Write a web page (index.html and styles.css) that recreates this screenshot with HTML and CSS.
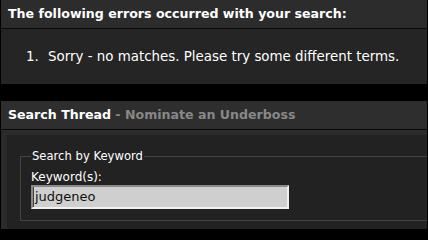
FILE: index.html
```html
<!DOCTYPE html>
<html>
<head>
<meta charset="utf-8">
<link rel="stylesheet" href="styles.css">
</head>
<body>
<div class="block errors">
  <div class="block-head">The following errors occurred with your search:</div>
  <div class="errors-body">
    <ol class="error-list">
      <li>Sorry - no matches. Please try some different terms.</li>
    </ol>
  </div>
</div>
<div class="block thread">
  <div class="block-head">Search Thread <span class="sub">- Nominate an Underboss</span></div>
  <div class="thread-body">
    <div class="panel">
      <fieldset class="keyword-set">
        <legend>Search by Keyword</legend>
        <div class="label">Keyword(s):</div>
        <div class="input-box">judgeneo</div>
      </fieldset>
    </div>
  </div>
</div>
</body>
</html>
```
FILE: styles.css
```css
html, body {
  margin: 0;
  padding: 0;
  background: #000;
  font-family: "DejaVu Sans", Verdana, sans-serif;
  color: #fff;
  overflow: hidden;
}
.block {
  margin: 0 1px;
}
.block-head {
  height: 29px;
  line-height: 28px;
  box-sizing: border-box;
  padding-left: 7px;
  background: #2c2c2c;
  border-bottom: 1px solid #0a0a0a;
  font-weight: bold;
  font-size: 12.6px;
  white-space: nowrap;
  overflow: hidden;
}
.errors-body {
  height: 55px;
  background: #252525;
  box-sizing: border-box;
  padding-top: 20px;
}
.error-list {
  margin: 0;
  padding-left: 25px;
  list-style: none;
  counter-reset: err;
  font-size: 13.4px;
  line-height: 15px;
}
.error-list li {
  counter-increment: err;
  white-space: nowrap;
}
.error-list li::before {
  content: counter(err) ".";
  display: inline-block;
  width: 22px;
}
.thread {
  margin-top: 17px;
}
.thread .block-head {
  background: #2e2e2e;
}
.sub {
  color: #888;
}
.thread-body {
  background: #2b2b2b;
  padding: 5px 0 0 6px;
  height: 99px;
  box-sizing: border-box;
}
.panel {
  background: #222;
  height: 94px;
  padding: 14px 0 0 13px;
  box-sizing: border-box;
}
.keyword-set {
  margin: 0;
  border: 1px solid #444;
  border-right: none;
  padding: 0 0 11px 10px;
  min-width: 0;
}
.keyword-set legend {
  padding: 0 1px;
  font-size: 11.6px;
  color: #fff;
}
.label {
  font-size: 12px;
  margin-top: 7px;
  line-height: 15px;
}
.input-box {
  margin-top: 0;
  width: 258px;
  height: 24px;
  box-sizing: border-box;
  border-style: solid;
  border-width: 2px;
  border-color: #8a8a8a #f0f0f0 #f0f0f0 #8a8a8a;
  box-shadow: inset 1px 0 0 #404040;
  background: #cfcfcf;
  color: #111;
  font-size: 13px;
  line-height: 20px;
  padding-left: 2px;
}
```
